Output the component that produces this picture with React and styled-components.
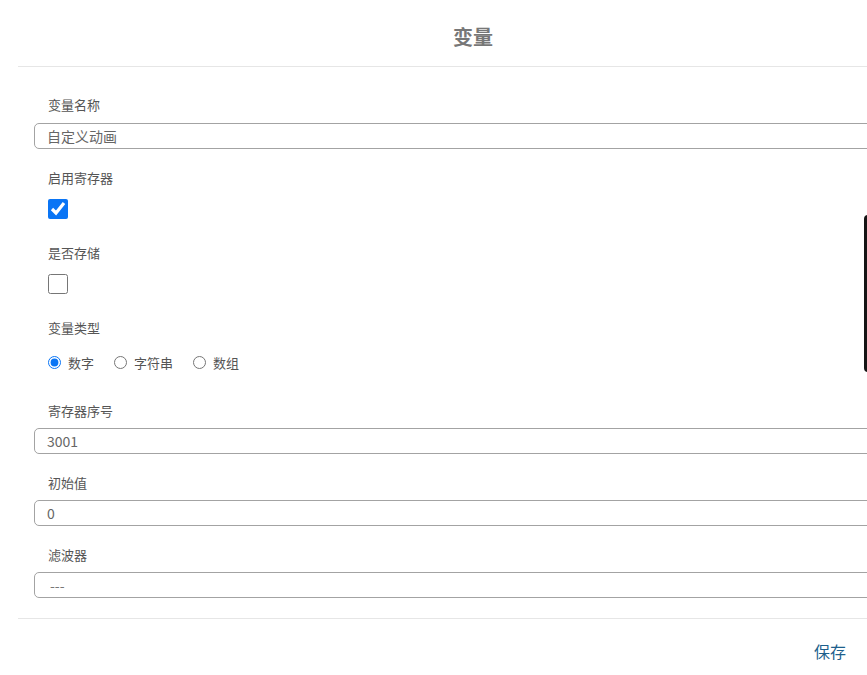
import styled, { createGlobalStyle } from 'styled-components'

const GlobalStyle = createGlobalStyle`
	html, body {
		margin: 0;
		padding: 0;
		background: #fff;
		font-family: "Noto Sans CJK SC", "Noto Sans", sans-serif;
	}
`

const Page = styled.div`
	position: relative;
	width: 867px;
	height: 675px;
	overflow: hidden;
	background: #fff;
`

const Modal = styled.div`
	margin-left: 18px;
	width: 910px;
`

const Header = styled.div`
	height: 67px;
	display: flex;
	align-items: center;
	justify-content: center;
	border-bottom: 1px solid #e6e6e6;
	padding-top: 6px;
	box-sizing: border-box;
	font-size: 20px;
	font-weight: 700;
	color: #777;
`

const Body = styled.div`
	padding: 29px 16px 20px;
	border-bottom: 1px solid #e6e6e6;
`

const Field = styled.div`
	display: flex;
	flex-direction: column;
	margin-bottom: ${({ $space }) => $space}px;

	&:last-child {
		margin-bottom: 0;
	}
`

const Label = styled.label`
	padding-left: 14px;
	font-size: 13px;
	line-height: 18px;
	color: #555;
	margin-bottom: ${({ $gap }) => $gap}px;
`

const TextInput = styled.input`
	height: 26px;
	box-sizing: border-box;
	border: 1px solid #a3a3a3;
	border-radius: 5px;
	padding: 0 12px;
	font-family: inherit;
	font-size: 14px;
	color: #666;
	outline: none;
	background: #fff;
`

const Select = styled.select`
	height: 26px;
	box-sizing: border-box;
	border: 1px solid #a3a3a3;
	border-radius: 5px;
	padding: 0 15px;
	font-family: inherit;
	font-size: 14px;
	color: #777;
	appearance: none;
	background: #fff;
	outline: none;
`

const Check = styled.input.attrs({ type: 'checkbox' })`
	width: 20px;
	height: 20px;
	margin: 0 0 0 14px;
	accent-color: #0a75f5;
`

const RadioRow = styled.div`
	display: flex;
	align-items: center;
	gap: 20px;
	padding-left: 14px;
	height: 18px;
`

const RadioOption = styled.label`
	display: flex;
	align-items: center;
	gap: 7px;
	font-size: 13px;
	color: #555;
`

const Radio = styled.input.attrs({ type: 'radio' })`
	width: 13px;
	height: 13px;
	margin: 0;
	accent-color: #0a75f5;
`

const Footer = styled.div`
	display: flex;
	justify-content: flex-end;
	padding: 20px 82px 0 0;
`

const SaveButton = styled.button`
	border: none;
	background: none;
	padding: 0;
	font-family: inherit;
	font-size: 16px;
	color: #1d5f8c;
	cursor: pointer;
`

const ScrollThumb = styled.div`
	position: absolute;
	left: 864px;
	top: 215px;
	width: 8px;
	height: 157px;
	border-radius: 4px;
	background: #151515;
`

const types = ['数字', '字符串', '数组']

export default function App() {
	return (
		<Page>
			<GlobalStyle />
			<Modal>
				<Header>变量</Header>
				<Body>
					<Field $space={20}>
						<Label $gap={9}>变量名称</Label>
						<TextInput defaultValue="自定义动画" />
					</Field>
					<Field $space={25}>
						<Label $gap={12}>启用寄存器</Label>
						<Check defaultChecked />
					</Field>
					<Field $space={25}>
						<Label $gap={12}>是否存储</Label>
						<Check />
					</Field>
					<Field $space={31}>
						<Label $gap={16}>变量类型</Label>
						<RadioRow>
							{types.map((t, i) => (
								<RadioOption key={t}>
									<Radio name="type" defaultChecked={i === 0} />
									{t}
								</RadioOption>
							))}
						</RadioRow>
					</Field>
					<Field $space={20}>
						<Label $gap={8}>寄存器序号</Label>
						<TextInput defaultValue="3001" />
					</Field>
					<Field $space={20}>
						<Label $gap={8}>初始值</Label>
						<TextInput defaultValue="0" />
					</Field>
					<Field $space={0}>
						<Label $gap={8}>滤波器</Label>
						<Select defaultValue="">
							<option value="">---</option>
						</Select>
					</Field>
				</Body>
				<Footer>
					<SaveButton>保存</SaveButton>
				</Footer>
			</Modal>
			<ScrollThumb />
		</Page>
	)
}
